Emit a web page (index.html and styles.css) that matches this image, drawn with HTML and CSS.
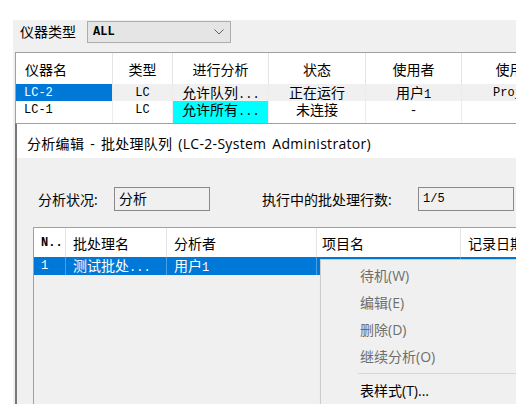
FILE: index.html
```html
<!DOCTYPE html>
<html lang="zh-CN">
  <head>
    <meta charset="UTF-8" />
    <title>分析编辑 - 批处理队列</title>
    <link rel="stylesheet" href="styles.css">
  </head>
  <body>
    <div class="window">
      <div class="toolbar">
        <span class="tool-label">仪器类型</span>
        <div class="combo">
          <span class="combo-value">ALL</span>
          <svg class="chevron" width="10" height="6" viewBox="0 0 10 6">
            <path d="M0.5 0.5 L5 5 L9.5 0.5" fill="none" stroke="#606060" stroke-width="1" />
          </svg>
        </div>
      </div>

      <div class="inst-grid">
        <div class="head left">仪器名</div>
        <div class="head">类型</div>
        <div class="head">进行分析</div>
        <div class="head">状态</div>
        <div class="head">使用者</div>
        <div class="head">使用</div>

        <div class="cell mono first sel">LC-2</div>
        <div class="cell mono center alt">LC</div>
        <div class="cell alt pad">允许队列<span class="dots">...</span></div>
        <div class="cell center alt">正在运行</div>
        <div class="cell center alt">用户<span class="mono">1</span></div>
        <div class="cell mono alt proj">Project1</div>

        <div class="cell mono first">LC-1</div>
        <div class="cell mono center">LC</div>
        <div class="cell pad cyan">允许所有<span class="dots">...</span></div>
        <div class="cell center">未连接</div>
        <div class="cell center">-</div>
        <div class="cell"></div>

        <div class="cell"></div>
        <div class="cell"></div>
        <div class="cell cyan"></div>
        <div class="cell"></div>
        <div class="cell"></div>
        <div class="cell"></div>
      </div>

      <div class="panel">
        <div class="panel-title">分析编辑 - 批处理队列 (LC-2-System Administrator)</div>
        <div class="panel-body">
          <div class="status-row">
            <span class="status-label">分析状况:</span>
            <div class="field">分析</div>
            <span class="status-label count-label">执行中的批处理行数:</span>
            <div class="field mono-field">1/5</div>
          </div>

          <div class="batch-list">
            <div class="batch-grid">
              <div class="bhead mono bold">N..</div>
              <div class="bhead">批处理名</div>
              <div class="bhead">分析者</div>
              <div class="bhead narrow">项目名</div>
              <div class="bhead">记录日期</div>

              <div class="bcell mono">1</div>
              <div class="bcell">测试批处<span class="dots">...</span></div>
              <div class="bcell">用户<span class="mono">1</span></div>
              <div class="bcell"></div>
              <div class="bcell"></div>
            </div>

            <div class="menu">
              <div class="menu-item disabled">待机(W)</div>
              <div class="menu-item disabled">编辑(E)</div>
              <div class="menu-item disabled">删除(D)</div>
              <div class="menu-item disabled">继续分析(O)</div>
              <div class="menu-sep"></div>
              <div class="menu-item">表样式(T)...</div>
            </div>
          </div>
        </div>
      </div>
    </div>
  </body>
</html>
```

FILE: styles.css
```css
body {
  margin: 0;
  background: #fff;
  font-family: "Open Sans", "Noto Sans CJK SC", sans-serif;
  font-size: 14px;
  color: #000;
}
.window {
  margin: 20px 0 0 13px;
  width: 503px;
  height: 384px;
  background: #f0f0f0;
  overflow: hidden;
  display: flex;
  flex-direction: column;
}
.mono {
  font-family: "Liberation Mono", monospace;
  font-size: 12px;
}
.bold {
  font-weight: bold;
}
.dots {
  font-family: "Liberation Mono", monospace;
  font-size: 12px;
}

/* top filter bar */
.toolbar {
  height: 32px;
  box-sizing: border-box;
  padding: 1px 0 0 7px;
  display: flex;
  align-items: flex-start;
  gap: 11px;
}
.tool-label {
  line-height: 22px;
}
.combo {
  width: 144px;
  height: 22px;
  box-sizing: border-box;
  border: 1px solid #adadad;
  background: #e5e5e5;
  display: flex;
  align-items: center;
  justify-content: space-between;
  padding: 0 6px 0 5px;
}
.combo-value {
  font-family: "Liberation Mono", monospace;
  font-weight: bold;
  font-size: 12px;
}

/* instrument table */
.inst-grid {
  margin-left: 2px;
  height: 71px;
  box-sizing: border-box;
  border-top: 1px solid #a0a0a0;
  border-left: 1px solid #a0a0a0;
  background: #fff;
  overflow: hidden;
  display: grid;
  grid-template-columns: 97px 60px 96px 97px 96px 96px;
  grid-template-rows: 31px 17px 18px 4px;
  flex-shrink: 0;
}
.head {
  border-right: 1px solid #e5e5e5;
  display: flex;
  align-items: center;
  justify-content: center;
  white-space: nowrap;
}
.head.left {
  justify-content: flex-start;
  padding-left: 9px;
}
.cell {
  border-right: 1px solid #ececec;
  line-height: 17px;
  white-space: nowrap;
}
.cell.first {
  padding-left: 8px;
}
.cell.center {
  text-align: center;
}
.cell.pad {
  padding-left: 9px;
}
.cell.alt {
  background: #f0f0f0;
}
.cell.sel {
  background: #0078d7;
  color: #fff;
}
.cell.mono {
  line-height: 18px;
}
.cell.proj {
  padding-left: 31px;
}
.cell.cyan {
  background: #00ffff;
}

/* batch queue panel */
.panel {
  margin-left: 2px;
  flex: 1;
  border-top: 1px solid #a0a0a0;
  border-left: 2px solid #787878;
  display: flex;
  flex-direction: column;
  min-height: 0;
}
.panel-title {
  height: 34px;
  box-sizing: border-box;
  background: #fff;
  padding: 3px 0 0 10px;
  display: flex;
  align-items: center;
  white-space: nowrap;
  word-spacing: 2px;
  letter-spacing: 0.3px;
}
.panel-body {
  flex: 1;
  padding: 29px 0 0 16px;
  display: flex;
  flex-direction: column;
  min-height: 0;
}
.status-row {
  display: flex;
  align-items: center;
  height: 24px;
  margin-left: 5px;
}
.status-label {
  width: 76px;
  white-space: nowrap;
}
.count-label {
  width: 156px;
  margin-left: 52px;
}
.field {
  width: 96px;
  height: 24px;
  box-sizing: border-box;
  border: 1px solid #8a8a8a;
  background: #f0f0f0;
  padding: 1px 0 0 4px;
  line-height: 20px;
  flex-shrink: 0;
}
.field.mono-field {
  font-family: "Liberation Mono", monospace;
  font-size: 12px;
}

.batch-list {
  margin-top: 16px;
  flex: 1;
  position: relative;
  border-top: 1px solid #a0a0a0;
  border-left: 1px solid #a0a0a0;
  background: #f0f0f0;
}
.batch-grid {
  display: grid;
  grid-template-columns: 32px 101px 150px 144px 144px;
  grid-template-rows: 29px 18px;
}
.bhead {
  background: #fff;
  border-right: 1px solid #e5e5e5;
  display: flex;
  align-items: center;
  padding-left: 7px;
  white-space: nowrap;
  overflow: hidden;
}
.bhead.narrow {
  padding-left: 5px;
}
.bcell {
  background: #0078d7;
  color: #fff;
  border-right: 1px solid #4a9fe3;
  line-height: 18px;
  padding-left: 7px;
  white-space: nowrap;
  overflow: hidden;
}

/* context menu */
.menu {
  position: absolute;
  left: 286px;
  top: 31px;
  width: 220px;
  height: 160px;
  box-sizing: border-box;
  padding-top: 2px;
  background: #f0f0f0;
  border-left: 1px solid #cccccc;
  border-top: 1px solid #cccccc;
  box-shadow: 2px 2px 3px rgba(0, 0, 0, 0.2);
}
.menu-item {
  height: 27px;
  line-height: 27px;
  padding-left: 39px;
  white-space: nowrap;
}
.menu-item.disabled {
  color: #6d6d6d;
}
.menu-sep {
  height: 1px;
  margin: 3px 0 3px 37px;
  background: #d7d7d7;
}
```
